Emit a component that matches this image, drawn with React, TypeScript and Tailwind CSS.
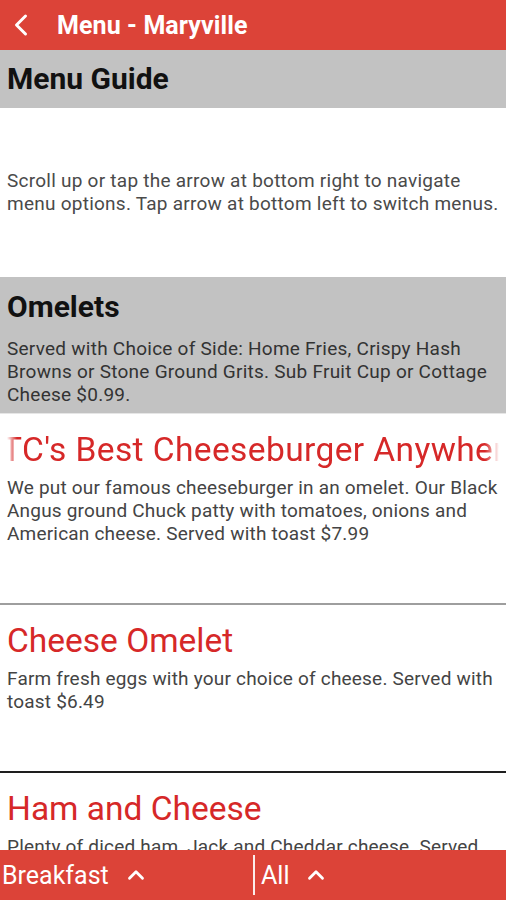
import { ChevronLeft, ChevronUp } from "lucide-react";

const items = [
  {
    title: "TC's Best Cheeseburger Anywhere",
    description:
      "We put our famous cheeseburger in an omelet. Our Black Angus ground Chuck patty with tomatoes, onions and American cheese. Served with toast $7.99",
    marquee: true,
    border: "border-[#9e9e9e]",
  },
  {
    title: "Cheese Omelet",
    description: "Farm fresh eggs with your choice of cheese. Served with toast $6.49",
    marquee: false,
    border: "border-[#1e1e1e]",
  },
  {
    title: "Ham and Cheese",
    description:
      "Plenty of diced ham, Jack and Cheddar cheese. Served with toast $7.49",
    marquee: false,
    border: "border-[#9e9e9e]",
  },
];

export default function App() {
  return (
    <div className="h-[900px] w-[506px] overflow-hidden bg-white font-['Roboto','Noto_Sans',sans-serif] relative">
      {/* App bar */}
      <header className="h-[50px] bg-[#dc4338] flex items-center text-white">
        <ChevronLeft className="w-[36px] h-[36px] ml-[3px]" strokeWidth={2} />
        <h1 className="ml-[18px] text-[25px] font-bold leading-none tracking-[0.1px]">Menu - Maryville</h1>
      </header>

      {/* Menu guide */}
      <div className="h-[58px] bg-[#c2c2c2] flex items-center px-[7px]">
        <h2 className="text-[30px] font-bold text-[#111] leading-none">Menu Guide</h2>
      </div>
      <div className="h-[169px] pt-[61px] pl-[7px] pr-[4px]">
        <p className="text-[19px] leading-[23px] tracking-[0.25px] text-[#4a4a4a]">
          Scroll up or tap the arrow at bottom right to navigate menu options. Tap arrow at bottom left to switch menus.
        </p>
      </div>

      {/* Category */}
      <section className="h-[137px] bg-[#c2c2c2] pl-[7px] pr-[4px] pt-[12px] border-b border-[#e6e6e6]">
        <h2 className="text-[30px] font-bold text-[#111] leading-[36px]">Omelets</h2>
        <p className="mt-[12px] text-[19px] leading-[23px] tracking-[0.25px] text-[#333]">
          Served with Choice of Side: Home Fries, Crispy Hash Browns or Stone Ground Grits. Sub Fruit Cup or Cottage Cheese $0.99.
        </p>
      </section>

      {/* Items */}
      {items.map((item, index) => (
        <article key={index} className={`pt-[16px] pb-[58px] border-b-2 ${item.border}`}>
          {item.marquee ? (
            <div className="mx-[7px] overflow-hidden [mask-image:linear-gradient(to_right,transparent,black_10px,black_calc(100%-14px),transparent)]">
              <h3 className="-ml-[5px] whitespace-nowrap text-[33.5px] leading-[40px] tracking-[0.4px] text-[#d62828]">{item.title}</h3>
            </div>
          ) : (
            <h3 className="px-[7px] whitespace-nowrap text-[33.5px] leading-[40px] text-[#d62828]">{item.title}</h3>
          )}
          <p className="mt-[6px] pl-[7px] text-[19px] leading-[23px] tracking-[0.2px] text-[#444]">{item.description}</p>
        </article>
      ))}

      {/* Bottom bar */}
      <footer className="absolute left-0 right-0 bottom-0 h-[50px] bg-[#dc4338] flex text-white">
        <button className="w-[253px] flex items-center pl-[2px] gap-[14px]">
          <span className="text-[25px] leading-none">Breakfast</span>
          <ChevronUp className="w-[26px] h-[26px]" strokeWidth={2.6} />
        </button>
        <div className="w-[2px] bg-white/90 my-[5px]" />
        <button className="flex-1 flex items-center pl-[6px] gap-[14px]">
          <span className="text-[25px] leading-none">All</span>
          <ChevronUp className="w-[26px] h-[26px]" strokeWidth={2.6} />
        </button>
      </footer>
    </div>
  );
}
